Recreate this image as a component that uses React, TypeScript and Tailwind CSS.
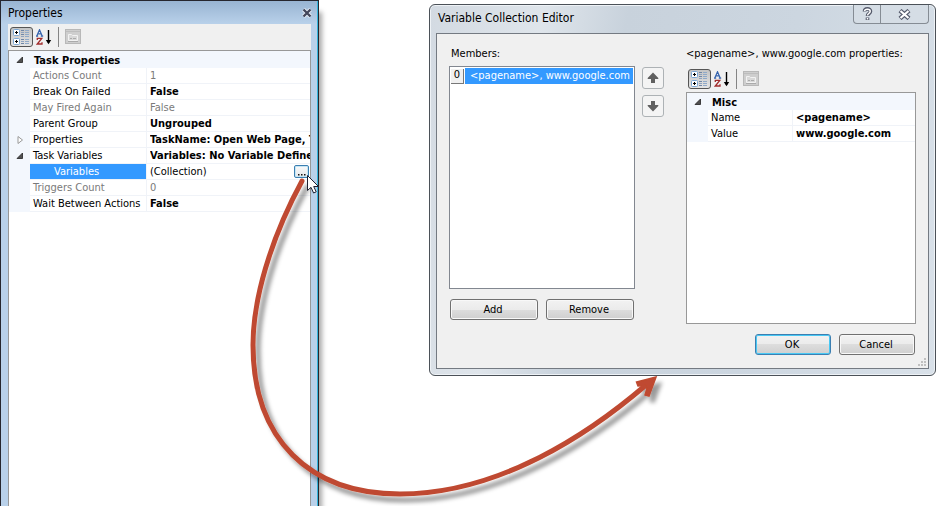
import React, { useId } from "react";

type Row = {
  name: string;
  value: string;
  muted?: boolean;
  plain?: boolean;
  selected?: boolean;
  glyph?: "open" | "closed";
};

const taskRows: Row[] = [
  { name: "Actions Count", value: "1", muted: true },
  { name: "Break On Failed", value: "False" },
  { name: "May Fired Again", value: "False", muted: true },
  { name: "Parent Group", value: "Ungrouped" },
  { name: "Properties", value: "TaskName: Open Web Page, T", glyph: "closed" },
  { name: "Task Variables", value: "Variables: No Variable Define", glyph: "open" },
  { name: "Variables", value: "(Collection)", plain: true, selected: true },
  { name: "Triggers Count", value: "0", muted: true },
  { name: "Wait Between Actions", value: "False" },
];

const miscRows: Row[] = [
  { name: "Name", value: "<pagename>" },
  { name: "Value", value: "www.google.com" },
];

function Glyph({ kind }: { kind: "open" | "closed" }) {
  return (
    <svg className="mx-auto block size-2" viewBox="0 0 8 8" aria-hidden="true">
      {kind === "open" ? (
        <path d="M6.500 1v5.500H1z" fill="#505050" stroke="#222" strokeWidth="0.8" />
      ) : (
        <path d="M2 0.5v7L6.5 4z" fill="#fff" stroke="#999" />
      )}
    </svg>
  );
}

function Toolbar() {
  return (
    <div className="flex h-[26px] items-center pl-0.5" role="toolbar" aria-label="Property view">
      <button
        type="button"
        aria-label="Categorized"
        aria-pressed="true"
        className="flex h-5 w-[23px] items-center justify-center rounded-[3px] border border-[#555] bg-linear-to-b from-[#c4c4c4] to-[#e4e4e4]"
      >
        <svg width="19" height="16" viewBox="0 0 19 16" aria-hidden="true">
          <rect x="1.5" y="0.5" width="6" height="6" rx="1" fill="#fff" stroke="#7ba7d4" />
          <rect x="1.5" y="9.5" width="6" height="6" rx="1" fill="#fff" stroke="#7ba7d4" />
          <path d="M3 3.5h3M4.5 2v3M3 12.5h3M4.5 11v3" stroke="#000" />
          <path d="M9 1.5h3M9 5.5h3M9 10.5h3M9 14.5h3" stroke="#6f86a6" />
          <path d="M9 3.5h3M9 7.5h3M9 12.5h3" stroke="#8ea3bf" />
          <path d="M13 1.5h4M13 3.5h4M13 5.5h4M13 7.5h4M13 10.5h4M13 12.5h4M13 14.5h4" stroke="#8fa9c8" />
        </svg>
      </button>
      <button type="button" aria-label="Alphabetical" className="ml-[3px] flex h-5 w-4 items-center">
        <svg width="16" height="16" viewBox="0 0 16 16" aria-hidden="true">
          <path d="M0.8 7L3.5 0.7 6.2 7M2 4.8h3M0 7.2h2.2M4.8 7.2h2.4" fill="none" stroke="#3563ad" strokeWidth="1.2" />
          <path d="M1.3 11V9.3h4.5L1.3 15h4.7v-1.8" fill="none" stroke="#a12c2c" strokeWidth="1.3" />
          <path d="M12.500 1v13" stroke="#000" strokeWidth="1.4" />
          <path d="M9.8 11h5.4l-2.7 4.2z" fill="#000" />
        </svg>
      </button>
      <span className="ml-1.5 h-5 w-px bg-[#858585]" />
      <button type="button" disabled aria-label="Property pages" className="ml-1.5 flex h-5 w-4 items-center">
        <svg width="16" height="16" viewBox="0 0 16 16" aria-hidden="true">
          <rect x="0.5" y="0.5" width="15" height="14" fill="#cecece" stroke="#b8b8b8" />
          <path d="M1 2.5h14" stroke="#bdbdbd" />
          <path d="M3.500 11.500v-6h3l1 1h5v5z" fill="#d8d8d8" stroke="#f2f2f2" />
          <path d="M5 9.5h2M8 9.5h3M3 12.500h10" stroke="#aaa" />
        </svg>
      </button>
    </div>
  );
}

function PropertyGrid({
  title,
  rows,
  nameWidth,
  className,
}: {
  title: string;
  rows: Row[];
  nameWidth: string;
  className: string;
}) {
  return (
    <div className={`overflow-hidden border border-[#989898] bg-white ${className}`}>
      <table className="w-full table-fixed border-separate border-spacing-0 text-left leading-[14px]">
        <colgroup>
          <col className="w-[21px]" />
          <col className={nameWidth} />
          <col />
        </colgroup>
        <thead>
          <tr className="h-[17px] bg-[#f3f7fd]">
            <td className="p-0">
              <Glyph kind="open" />
            </td>
            <th colSpan={2} className="p-0 pt-0.5 pl-1 font-bold">
              {title}
            </th>
          </tr>
        </thead>
        <tbody>
          {rows.map((r) => (
            <tr key={r.name} className={r.muted ? "h-4 text-[#7a7a7a]" : "h-4"}>
              <td className="bg-[#f3f7fd] p-0">{r.glyph && <Glyph kind={r.glyph} />}</td>
              <th
                scope="row"
                className={`overflow-hidden border-r border-b border-[#f0f3f8] p-0 pt-px font-normal whitespace-nowrap ${
                  r.selected ? "bg-[#3399ff] pl-6 text-white" : "pl-[3px]"
                }`}
              >
                {r.name}
              </th>
              <td className="border-b border-[#f0f3f8] p-0 pl-[3px]">
                <div className="flex h-[15px] items-center">
                  <span
                    className={`min-w-0 flex-1 overflow-hidden pt-px whitespace-nowrap ${
                      r.muted || r.plain ? "" : "font-bold"
                    }`}
                  >
                    {r.value}
                  </span>
                  {r.selected && (
                    <button
                      type="button"
                      aria-label="Edit variables"
                      className="mr-px flex h-[13px] w-[15px] items-center justify-center rounded-xs border border-[#3c7fb1] bg-linear-to-b from-[#fafafa] to-[#e2e6ea] ring-1 ring-[#c5e6f5] ring-inset"
                    >
                      <svg width="9" height="9" viewBox="0 0 9 9" aria-hidden="true">
                        <path d="M1 7h1.500v1.500H1zM4 7h1.500v1.500H4zM7 7h1.500v1.500H7z" fill="#111" />
                      </svg>
                    </button>
                  )}
                </div>
              </td>
            </tr>
          ))}
        </tbody>
      </table>
    </div>
  );
}

function PushButton({ children, primary }: { children: string; primary?: boolean }) {
  return (
    <button
      type="button"
      className={`h-[21px] flex-1 rounded-[3px] border bg-[linear-gradient(#f2f2f2,#ebebeb_50%,#dddddd_50%,#cfcfcf)] pt-px pr-0.5 leading-4 ring-1 ring-inset ${
        primary ? "border-[#3c7fb1] ring-[#48c8f4]" : "border-[#707070] ring-[#f8f8f8]"
      }`}
    >
      {children}
    </button>
  );
}

function MoveButton({ label, down }: { label: string; down?: boolean }) {
  return (
    <button
      type="button"
      aria-label={label}
      className="flex size-[22px] items-center justify-center rounded-[3px] border border-[#adb2b5] bg-[#f4f4f4]"
    >
      <svg width="12" height="12" viewBox="0 0 12 12" aria-hidden="true" className={down ? "rotate-180" : ""}>
        <path d="M6 0.500l5.300 5.500v1H8v4H4V7H0.700V6z" fill="#606060" />
      </svg>
    </button>
  );
}

function PropertiesPanel() {
  return (
    <section
      aria-label="Properties"
      className="flex w-[319px] shrink-0 flex-col border-t border-r border-l border-[#26262e] bg-[#b9d1ea] shadow-[3px_12px_5px_rgba(0,0,0,0.35)]"
    >
      <div className="flex flex-1 flex-col border-r border-[#35b5dc] pr-1.5 pl-[7px]">
        <header className="-mr-1.5 -ml-[7px] flex h-[23px] items-center justify-between bg-linear-to-b from-[#98b4d2] to-[#b9d1ea] pr-[3px] pl-[7px]">
          <h1 className="text-xs">Properties</h1>
          <button type="button" aria-label="Close" className="flex size-3.5 items-center justify-center">
            <svg width="12" height="10" viewBox="0 0 12 10" aria-hidden="true">
              <path d="M2.500 1.500l7 7M9.500 1.500l-7 7" stroke="#e8eef6" strokeWidth="4" />
              <path d="M2.500 1.500l7 7M9.500 1.500l-7 7" stroke="#43465a" strokeWidth="2.400" />
            </svg>
          </button>
        </header>
        <div className="bg-[#f0f0f0]">
          <Toolbar />
        </div>
        <PropertyGrid title="Task Properties" rows={taskRows} nameWidth="w-[117px]" className="flex-1 border-b-0" />
      </div>
    </section>
  );
}

function CollectionEditor() {
  return (
    <section
      role="dialog"
      aria-label="Variable Collection Editor"
      className="mt-1 mr-[7px] ml-[110px] min-w-0 flex-1 self-start rounded-md border border-[#4b5158] bg-[linear-gradient(100deg,#d3dae2,#dfe5eb_20%,#c8d2dc_35%,#ccd6e0_65%,#d9e1e9)] px-1.5 pb-1.5 ring-1 ring-[#eef2f6] ring-inset"
    >
      <header className="flex h-7 items-start justify-between">
        <h2 className="pt-[5px] pl-0.5 text-xs">Variable Collection Editor</h2>
        <div className="flex h-[19px] rounded-b-[4px] border border-t-0 border-[#858c94] bg-[#d5dde5]">
          <button type="button" aria-label="Help" className="flex w-[27px] items-center justify-center border-r border-[#858c94]">
            <svg width="11" height="14" viewBox="0 0 11 14" aria-hidden="true">
              <path d="M2.500 4.500C2.500 1 8.500 1 8.500 4.200 8.500 6.500 5.500 6.500 5.500 9M5.500 10.500V13" fill="none" stroke="#565b6c" strokeWidth="3.600" />
              <path d="M2.500 4.200C2.900 1.500 8.200 1.700 8.200 4.200 8.200 6.500 5.500 6.500 5.500 8.500M5.500 11V12.500" fill="none" stroke="#fff" strokeWidth="1.500" />
            </svg>
          </button>
          <button type="button" aria-label="Close" className="flex w-[47px] items-center justify-center">
            <svg width="13" height="11" viewBox="0 0 13 11" aria-hidden="true">
              <path d="M2 1.500l9 8M11 1.500l-9 8" stroke="#565b6c" strokeWidth="4.400" />
              <path d="M2.500 2l8 7M10.500 2l-8 7" stroke="#fff" strokeWidth="2.200" />
            </svg>
          </button>
        </div>
      </header>
      <div className="flex border border-[#747a82] bg-[#f0f0f0] pt-[11px] pr-3 pl-3">
        <div className="w-[186px] shrink-0">
          <h3 id="members-label" className="h-4 pt-px pl-0.5 leading-4">
            Members:
          </h3>
          <ul
            role="listbox"
            aria-labelledby="members-label"
            className="mt-[5px] h-[223px] border border-[#828790] bg-white p-px"
          >
            <li role="option" aria-selected="true" className="flex h-4 items-center">
              <span className="flex h-[15px] w-[13px] items-center justify-center border-r border-b border-[#777] bg-[#f0f0f0]">
                0
              </span>
              <span className="ml-px flex h-4 flex-1 items-center bg-[#3399ff] pl-[5px] whitespace-nowrap text-white">
                {"<pagename>, www.google.com"}
              </span>
            </li>
          </ul>
          <div className="mt-2.5 flex gap-2 px-px">
            <PushButton>Add</PushButton>
            <PushButton>Remove</PushButton>
          </div>
        </div>
        <div className="mt-[22px] ml-[7px] flex flex-col gap-1.5">
          <MoveButton label="Move up" />
          <MoveButton label="Move down" down />
        </div>
        <div className="ml-[22px] min-w-0 flex-1">
          <h3 className="h-4 pt-px leading-4 whitespace-nowrap">{"<pagename>, www.google.com properties:"}</h3>
          <div className="mt-[5px]">
            <Toolbar />
          </div>
          <PropertyGrid title="Misc" rows={miscRows} nameWidth="w-[85px]" className="h-[232px]" />
          <div className="mt-2.5 flex justify-end gap-2 pr-px">
            <div className="flex w-[76px]">
              <PushButton primary>OK</PushButton>
            </div>
            <div className="flex w-[76px]">
              <PushButton>Cancel</PushButton>
            </div>
          </div>
          <div className="-mr-2.5 flex h-[13px] items-end justify-end pb-0.5">
            <svg width="8" height="8" viewBox="0 0 8 8" aria-hidden="true">
              <path d="M6 0h2v2H6zM3 3h2v2H3zM6 3h2v2H6zM0 6h2v2H0zM3 6h2v2H3zM6 6h2v2H6z" fill="#c0c0c0" />
            </svg>
          </div>
        </div>
      </div>
    </section>
  );
}

function Annotation() {
  const shadow = useId();
  return (
    <svg
      className="pointer-events-none absolute top-0 left-0"
      width="700"
      height="506"
      viewBox="0 0 700 506"
      aria-hidden="true"
    >
      <defs>
        <filter id={shadow} x="-10%" y="-10%" width="120%" height="120%">
          <feDropShadow dx="5" dy="6" stdDeviation="2" floodColor="#000" floodOpacity="0.4" />
        </filter>
      </defs>
      <g filter={`url(#${shadow})`}>
        <path
          d="M302 181C270 240 253 300 253 345 253 440 310 494 400 494 500 494 590 433 646 385"
          fill="none"
          stroke="#bf4a30"
          strokeWidth="5"
          strokeLinecap="round"
        />
        <path
          d="M656 377L636.500 382l1.500 4 7-.5 2 3-2 6.500 4 1z"
          fill="#bf4a30"
          stroke="#bf4a30"
          strokeWidth="1.500"
        />
      </g>
      <path
        d="M307.500 175.500v15l3.500-3.200 2.600 5.700 2.600-1.200-2.500-5.300h4.800z"
        fill="#fff"
        stroke="#1c2030"
      />
    </svg>
  );
}

export default function App() {
  return (
    <main className="relative flex min-h-screen overflow-hidden bg-white font-['DejaVu_Sans_Condensed','DejaVu_Sans',sans-serif] text-[11px] text-black">
      <PropertiesPanel />
      <CollectionEditor />
      <Annotation />
    </main>
  );
}
